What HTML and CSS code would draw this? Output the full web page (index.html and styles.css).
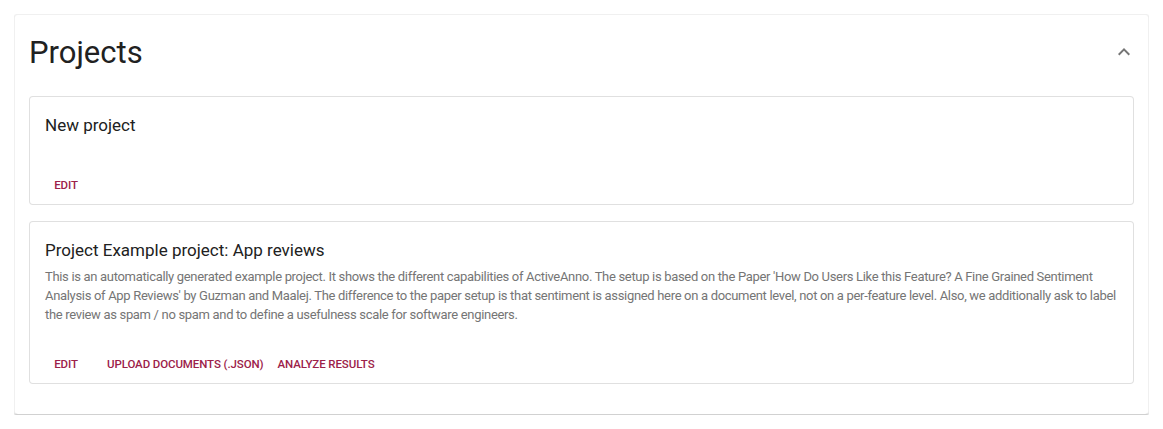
FILE: index.html
```html
<!DOCTYPE html>
<html>
<head>
<meta charset="utf-8">
<link rel="stylesheet" href="styles.css">
</head>
<body>
<section class="paper">
  <header class="paper-header">
    <h1 class="paper-title">Projects</h1>
    <button class="icon-btn" aria-label="collapse">
      <svg viewBox="0 0 24 24" width="24" height="24"><path d="M12 8l-6 6 1.41 1.41L12 10.83l4.59 4.58L18 14z" fill="#757575"/></svg>
    </button>
  </header>
  <div class="card-list">
    <article class="card">
      <div class="card-content">
        <h2 class="card-title">New project</h2>
        <p class="card-desc card-desc-empty"></p>
      </div>
      <div class="card-actions">
        <button class="text-btn">Edit</button>
      </div>
    </article>
    <article class="card">
      <div class="card-content">
        <h2 class="card-title">Project Example project: App reviews</h2>
        <p class="card-desc">This is an automatically generated example project. It shows the different capabilities of ActiveAnno. The setup is based on the Paper 'How Do Users Like this Feature? A Fine Grained Sentiment<br>Analysis of App Reviews' by Guzman and Maalej. The difference to the paper setup is that sentiment is assigned here on a document level, not on a per-feature level. Also, we additionally ask to label<br>the review as spam / no spam and to define a usefulness scale for software engineers.</p>
      </div>
      <div class="card-actions">
        <button class="text-btn">Edit</button>
        <button class="text-btn">Upload documents (.json)</button>
        <button class="text-btn">Analyze results</button>
      </div>
    </article>
  </div>
</section>
</body>
</html>
```
FILE: styles.css
```css
* { box-sizing: border-box; }
html, body { background: #ffffff; }
body {
  margin: 14px;
  font-family: Roboto, "Noto Sans", sans-serif;
  color: rgba(0, 0, 0, 0.87);
}
.paper {
  width: 1135px;
  background: #fff;
  border-radius: 4px;
  border: 1px solid rgba(0,0,0,0.06);
  border-bottom-color: rgba(0,0,0,0.18);
  box-shadow: 0 1px 2px rgba(0,0,0,0.14), 0 1px 3px 0 rgba(0,0,0,0.08);
  padding: 19px 14px 30px 14px;
}
.paper-header {
  display: flex;
  align-items: center;
  justify-content: space-between;
  height: 38px;
  margin-bottom: 24px;
}
.paper-title {
  margin: 0;
  font-size: 31px;
  font-weight: 400;
  line-height: 38px;
  color: #212121;
}
.icon-btn {
  border: 0;
  background: transparent;
  padding: 0;
  width: 24px;
  height: 24px;
  margin-right: -2px;
  margin-top: -2px;
  display: flex;
}
.card-list {
  display: flex;
  flex-direction: column;
  gap: 16px;
}
.card {
  border: 1px solid rgba(0,0,0,0.12);
  border-radius: 4px;
  background: #fff;
}
.card-content {
  padding: 15px 15px 17px 15px;
}
.card-title {
  margin: 0;
  font-size: 17px;
  font-weight: 400;
  line-height: 26px;
  color: #212121;
}
.card-desc {
  margin: 4px 0 0 0;
  white-space: nowrap;
  font-size: 13px;
  letter-spacing: -0.32px;
  line-height: 19px;
  color: #757575;
}
.card-desc-empty { height: 3px; }
.card-actions {
  display: flex;
  align-items: center;
  gap: 4px;
  padding: 8px 4px 4px 4px;
}
.text-btn {
  border: 0;
  background: transparent;
  font-family: Roboto, "Noto Sans", sans-serif;
  font-size: 11.5px;
  font-weight: 500;
  letter-spacing: -0.1px;
  text-transform: uppercase;
  color: #9c2149;
  line-height: 22px;
  padding: 4px 5px;
  min-width: 64px;
  height: 30px;
  border-radius: 4px;
  cursor: pointer;
}
```
